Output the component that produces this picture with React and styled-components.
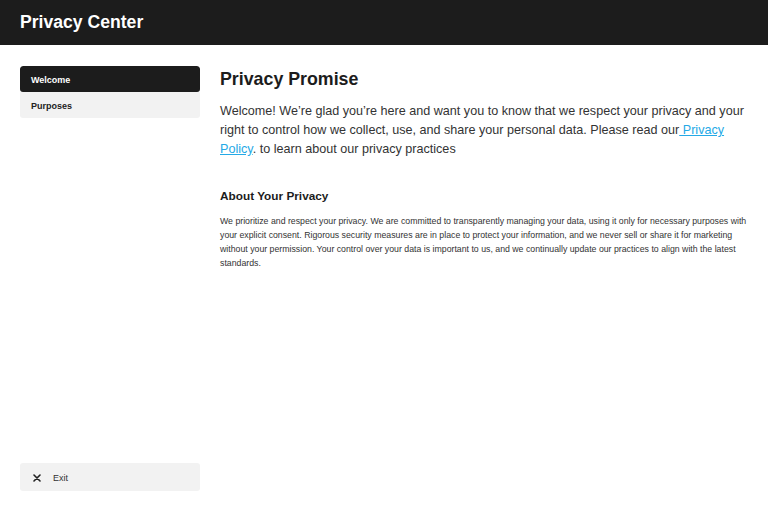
import React from 'react';
import styled, { createGlobalStyle } from 'styled-components';

const GlobalStyle = createGlobalStyle`
  html, body {
    margin: 0;
    padding: 0;
    background: #fff;
    font-family: 'Liberation Sans', Arial, sans-serif;
  }
`;

const Page = styled.div`
  display: flex;
  flex-direction: column;
  height: 512px;
`;

const Header = styled.header`
  height: 45px;
  flex-shrink: 0;
  background: #1c1c1c;
  display: flex;
  align-items: center;
  padding: 0 20px;
`;

const Title = styled.h1`
  margin: 0;
  color: #fff;
  font-size: 17.6px;
  font-weight: 700;
`;

const Body = styled.div`
  flex: 1;
  display: flex;
  gap: 20px;
  padding: 21px 20px;
  min-height: 0;
`;

const Sidebar = styled.nav`
  width: 180px;
  flex-shrink: 0;
  display: flex;
  flex-direction: column;
`;

const NavList = styled.ul`
  list-style: none;
  margin: 0;
  padding: 0;
  border-radius: 3px;
  overflow: hidden;
`;

const NavItem = styled.li`
  height: 25px;
  display: flex;
  align-items: center;
  padding: 1px 11px 0;
  font-size: 9px;
  font-weight: 700;
  background: ${(p) => (p.active ? '#1c1c1c' : '#f2f2f2')};
  color: ${(p) => (p.active ? '#fff' : '#222')};
  border-radius: ${(p) => (p.active ? '3px' : '0')};
`;

const ExitButton = styled.button`
  margin-top: auto;
  height: 28px;
  display: flex;
  align-items: center;
  gap: 12px;
  padding: 1px 13px 0;
  border: none;
  border-radius: 3px;
  background: #f2f2f2;
  color: #333;
  font-family: inherit;
  font-size: 9px;
  cursor: pointer;
`;

const Main = styled.main`
  flex: 1;
  min-width: 0;
  padding-top: 3px;
`;

const Heading = styled.h2`
  margin: 0 0 12px;
  font-size: 17.8px;
  font-weight: 700;
  color: #1c1c1c;
`;

const Lead = styled.p`
  margin: 0 0 30px;
  font-size: 12.6px;
  line-height: 19px;
  color: #333;
`;

const Link = styled.a`
  color: #25a9e6;
  text-decoration: underline;
`;

const SubHeading = styled.h3`
  margin: 0 0 12px;
  font-size: 11.8px;
  font-weight: 700;
  color: #1c1c1c;
`;

const Small = styled.p`
  margin: 0;
  font-size: 8.75px;
  line-height: 13.9px;
  color: #333;
`;

const CloseIcon = () => (
  <svg width="8" height="8" viewBox="0 0 8 8">
    <path d="M1 1L7 7M7 1L1 7" stroke="#222" strokeWidth="1.6" strokeLinecap="round" />
  </svg>
);

export default function App() {
  return (
    <Page>
      <GlobalStyle />
      <Header>
        <Title>Privacy Center</Title>
      </Header>
      <Body>
        <Sidebar>
          <NavList>
            <NavItem active>Welcome</NavItem>
            <NavItem>Purposes</NavItem>
          </NavList>
          <ExitButton>
            <CloseIcon />
            Exit
          </ExitButton>
        </Sidebar>
        <Main>
          <Heading>Privacy Promise</Heading>
          <Lead>
            Welcome! We’re glad you’re here and want you to know that we respect your privacy
            and your right to control how we collect, use, and share your personal data. Please
            read our<Link href="#"> Privacy Policy</Link>. to learn about our privacy practices
          </Lead>
          <SubHeading>About Your Privacy</SubHeading>
          <Small>
            We prioritize and respect your privacy. We are committed to transparently managing
            your data, using it only for necessary purposes with your explicit consent. Rigorous
            security measures are in place to protect your information, and we never sell or
            share it for marketing without your permission. Your control over your data is
            important to us, and we continually update our practices to align with the latest
            standards.
          </Small>
        </Main>
      </Body>
    </Page>
  );
}
